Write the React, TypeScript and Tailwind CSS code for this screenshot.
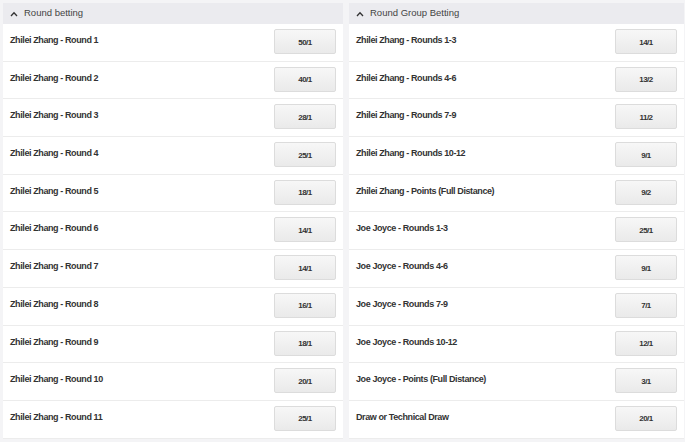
const roundBetting: [string, string][] = [
  ["Zhilei Zhang - Round 1", "50/1"],
  ["Zhilei Zhang - Round 2", "40/1"],
  ["Zhilei Zhang - Round 3", "28/1"],
  ["Zhilei Zhang - Round 4", "25/1"],
  ["Zhilei Zhang - Round 5", "18/1"],
  ["Zhilei Zhang - Round 6", "14/1"],
  ["Zhilei Zhang - Round 7", "14/1"],
  ["Zhilei Zhang - Round 8", "16/1"],
  ["Zhilei Zhang - Round 9", "18/1"],
  ["Zhilei Zhang - Round 10", "20/1"],
  ["Zhilei Zhang - Round 11", "25/1"],
]

const groupBetting: [string, string][] = [
  ["Zhilei Zhang - Rounds 1-3", "14/1"],
  ["Zhilei Zhang - Rounds 4-6", "13/2"],
  ["Zhilei Zhang - Rounds 7-9", "11/2"],
  ["Zhilei Zhang - Rounds 10-12", "9/1"],
  ["Zhilei Zhang - Points (Full Distance)", "9/2"],
  ["Joe Joyce - Rounds 1-3", "25/1"],
  ["Joe Joyce - Rounds 4-6", "9/1"],
  ["Joe Joyce - Rounds 7-9", "7/1"],
  ["Joe Joyce - Rounds 10-12", "12/1"],
  ["Joe Joyce - Points (Full Distance)", "3/1"],
  ["Draw or Technical Draw", "20/1"],
]

function Market({ title, rows }: { title: string; rows: [string, string][] }) {
  return (
    <div className="flex flex-col">
      <div className="flex h-[21px] items-center gap-[6px] bg-[#ebebef] pl-[7px] text-[9.5px] text-[#444]">
        <svg width="8" height="6" viewBox="0 0 8 6" className="mt-[1px]">
          <path d="M1 5 L4 1.8 L7 5" fill="none" stroke="#333" strokeWidth="1.3" />
        </svg>
        <span>{title}</span>
      </div>
      {rows.map(([label, odds]) => (
        <div
          key={label}
          className="flex h-[37.7px] items-start justify-between border-b border-[#ececec] bg-white pl-[7px] pr-[7px]"
        >
          <span className="pt-[11px] text-[9px] font-bold leading-[10px] tracking-[-0.4px] text-[#333]">{label}</span>
          <button className="mt-[5px] flex h-[25px] w-[62px] items-center justify-center rounded-[2px] border border-[#dcdcdc] bg-gradient-to-b from-[#f7f7f7] to-[#eaeaea] pt-[2px] text-[8px] font-bold tracking-[-0.5px] text-[#333]">
            {odds}
          </button>
        </div>
      ))}
    </div>
  )
}

export default function App() {
  return (
    <div
      className="h-[442px] w-[685px] overflow-hidden bg-[#f4f4f6] pl-[3px] pt-[3px]"
      style={{ fontFamily: '"Liberation Sans", Arial, sans-serif' }}
    >
      <div className="grid grid-cols-[340px_335px] gap-[6px]">
        <Market title="Round betting" rows={roundBetting} />
        <Market title="Round Group Betting" rows={groupBetting} />
      </div>
    </div>
  )
}
